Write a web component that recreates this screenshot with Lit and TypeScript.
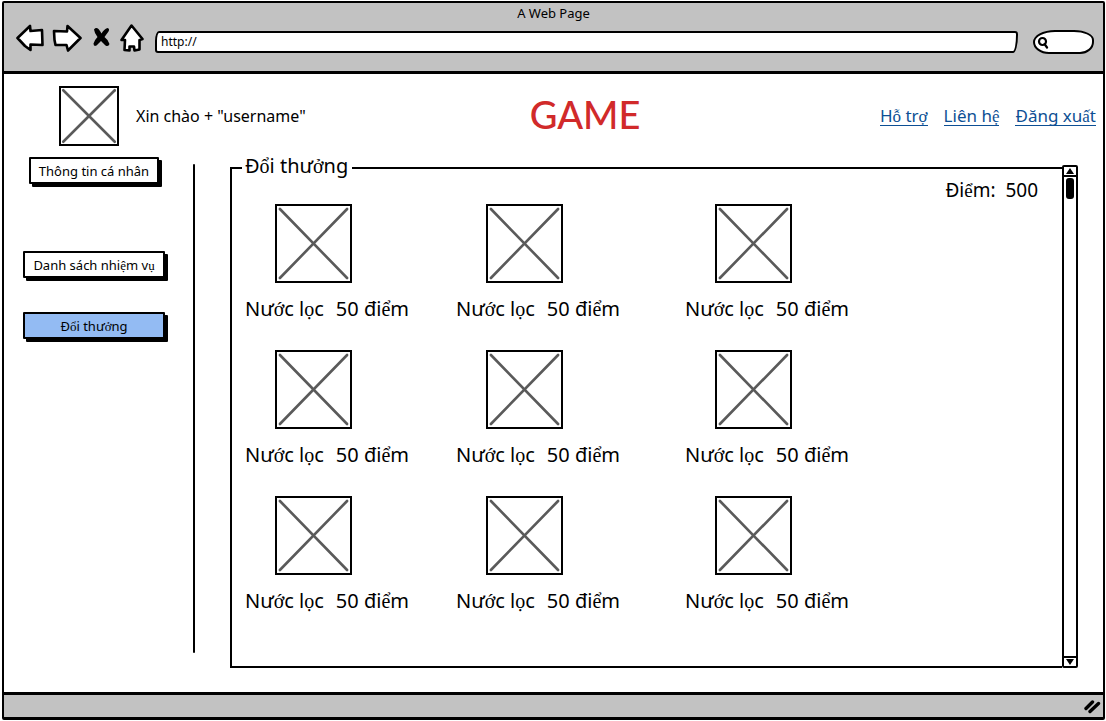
import { LitElement, html, css, svg } from "lit";
import { customElement, property } from "lit/decorators.js";

/** Vietnamese letters with stacked marks are set in the serif fallback face. */
const viet = (text: string) =>
  text
    .split(/([\u1ea0-\u1ef9]+)/)
    .filter((part) => part)
    .map((part) =>
      /[\u1ea0-\u1ef9]/.test(part) ? html`<span class="alt">${part}</span>` : part
    );

const altFace = css`
  .alt {
    font-family: "Liberation Serif", serif;
    line-height: 1;
  }
`;

@customElement("image-placeholder")
export class ImagePlaceholder extends LitElement {
  static styles = css`
    :host {
      display: block;
      box-sizing: border-box;
      border: 2px solid #000;
      background: #fff;
    }
    svg {
      display: block;
      width: 100%;
      height: 100%;
    }
    .cross {
      stroke: #5a5a5a;
      stroke-width: 2.6;
      stroke-linecap: round;
      vector-effect: non-scaling-stroke;
    }
  `;

  render() {
    return html`<svg viewBox="0 0 100 100" preserveAspectRatio="none" aria-hidden="true">
      <line class="cross" x1="4" y1="4" x2="96" y2="96"></line>
      <line class="cross" x1="96" y1="4" x2="4" y2="96"></line>
    </svg>`;
  }
}

@customElement("reward-card")
export class RewardCard extends LitElement {
  @property() name = "";
  @property() cost = "";

  static styles = [
    altFace,
    css`
      :host {
        display: block;
      }
      .picture {
        width: 77px;
        height: 79px;
        margin-left: 30px;
      }
      .caption {
        display: flex;
        gap: 12px;
        margin: 14px 0 0;
        font-size: 20px;
        line-height: 24px;
        white-space: nowrap;
      }
    `,
  ];

  render() {
    return html`
      <image-placeholder class="picture"></image-placeholder>
      <p class="caption"><span>${viet(this.name)}</span><span>${viet(this.cost)}</span></p>
    `;
  }
}

const outline = (d: string) =>
  svg`<path d=${d} fill="#fff" stroke="#000" stroke-width="2.6" stroke-linejoin="round"></path>`;

@customElement("app-root")
export class AppRoot extends LitElement {
  private rewards = Array.from({ length: 9 }, () => ({ name: "Nước lọc", cost: "50 điểm" }));

  static styles = [
    altFace,
    css`
      :host {
        display: block;
        box-sizing: border-box;
        min-height: 100vh;
        padding: 1px 1px 1px 2px;
        background: #fff;
        color: #000;
        font-family: "Noto Sans", sans-serif;
        font-size: 13px;
      }
      .window {
        display: flex;
        flex-direction: column;
        box-sizing: border-box;
        min-height: calc(100vh - 2px);
        border: 2px solid #000;
        border-bottom-width: 3px;
        border-radius: 2px;
      }
      .chrome {
        background: #c2c2c2;
        border-bottom: 3px solid #000;
        height: 68px;
      }
      .title {
        margin: 0;
        padding-top: 1px;
        font-size: 13px;
        font-weight: 400;
        line-height: 19px;
        text-align: center;
      }
      .toolbar {
        display: flex;
        align-items: center;
        gap: 8px;
        height: 34px;
        padding: 0 9px 0 12px;
      }
      .tool {
        display: block;
        margin-bottom: 5px;
        padding: 0;
        border: 0;
        background: none;
      }
      .tool svg {
        display: block;
      }
      .address {
        flex: 1;
        box-sizing: border-box;
        min-width: 0;
        height: 22px;
        margin: 3px 7px 0 3px;
        padding: 0 4px;
        border: 2px solid #000;
        border-radius: 4px 3px 5px 3px / 10px 3px 18px 3px;
        background: #fff;
        color: #000;
        font: inherit;
        font-size: 12px;
      }
      .search {
        display: flex;
        align-items: center;
        box-sizing: border-box;
        width: 61px;
        height: 24px;
        margin-top: 3px;
        padding-left: 2px;
        border: 2px solid #000;
        border-radius: 22px 20px 14px 16px / 12px 10px 12px 12px;
        background: #fff;
      }
      .search input {
        flex: 1;
        min-width: 0;
        padding: 0;
        border: 0;
        background: none;
        font: inherit;
        outline: none;
      }
      .masthead {
        display: grid;
        grid-template-columns: 25fr auto 22fr;
        align-items: center;
        padding-top: 12px;
      }
      .user {
        display: flex;
        align-items: center;
        gap: 17px;
        padding-left: 55px;
        font-size: 16px;
      }
      .avatar {
        width: 60px;
        height: 60px;
      }
      .brand {
        margin: 0;
        padding-bottom: 4px;
        color: #d12a2a;
        font-family: Lato, sans-serif;
        font-size: 38px;
        font-weight: 500;
        line-height: 48px;
      }
      .links {
        display: flex;
        justify-content: flex-end;
        gap: 16px;
        padding-right: 7px;
        font-size: 17px;
        line-height: 18px;
      }
      .links a {
        color: #0d4f94;
        border-bottom: 1px solid #0d4f94;
        text-decoration: none;
      }
      .body {
        display: flex;
        flex: 1;
        padding: 10px 25px 24px 18px;
      }
      .menu {
        display: flex;
        flex-direction: column;
        align-items: center;
        gap: 34px;
        width: 144px;
        padding-top: 1px;
      }
      .menu button {
        box-sizing: border-box;
        width: 142px;
        height: 27px;
        padding: 0;
        border: 2px solid #000;
        border-radius: 1px;
        background: #fff;
        box-shadow: 3px 3px 0 #000;
        color: #000;
        font: inherit;
        font-size: 13px;
        line-height: 20px;
      }
      .menu .profile {
        width: 130px;
        margin-bottom: 33px;
      }
      .menu .current {
        background: #93bbf3;
      }
      .divider {
        width: 2px;
        margin: 8px 35px 15px 27px;
        border-radius: 2px;
        background: #000;
      }
      .panel {
        flex: 1;
        min-width: 0;
        margin: 0;
        padding: 0 0 0 13px;
        border: 2px solid #000;
        border-right: 0;
      }
      .panel legend {
        margin-left: -3px;
        padding: 0 4px 4px 3px;
        font-size: 20px;
        line-height: 20px;
      }
      .points {
        margin: 0;
        padding-right: 24px;
        font-size: 19px;
        line-height: 20px;
        text-align: right;
        white-space: pre;
      }
      .rewards {
        display: grid;
        grid-template-columns: 211fr 229fr 377fr;
        row-gap: 29px;
        padding-top: 4px;
      }
      .scroll {
        display: flex;
        flex-direction: column;
        align-items: center;
        justify-content: space-between;
        box-sizing: border-box;
        width: 16px;
        margin-top: 9px;
        border: 2px solid #000;
        border-radius: 2px;
      }
      .scroll button {
        display: block;
        box-sizing: border-box;
        width: 12px;
        height: 10px;
        padding: 0;
        border: 0;
        background: #fff;
      }
      .scroll svg {
        display: block;
      }
      .scroll .up {
        border-bottom: 2px solid #000;
      }
      .scroll .down {
        border-top: 2px solid #000;
      }
      .thumb {
        width: 8px;
        height: 21px;
        margin: 1px 0 auto;
        border-radius: 3px;
        background: #000;
      }
      .status {
        display: flex;
        align-items: center;
        justify-content: flex-end;
        height: 22px;
        padding: 0 2px;
        border-top: 3px solid #000;
        background: #c2c2c2;
      }
    `,
  ];

  render() {
    return html`
      <div class="window">
        <header class="chrome">
          <h1 class="title">A Web Page</h1>
          <div class="toolbar">
            <button class="tool" aria-label="Back">
              <svg width="28" height="28" viewBox="0 0 28 28">
                ${outline("M1.500 14 14 2 14.500 7 26 6 26.500 21 14.500 20.500 14.500 26 9 22Z")}
              </svg>
            </button>
            <button class="tool" aria-label="Forward">
              <svg width="30" height="28" viewBox="0 0 30 28">
                ${outline("M2 7 15 7.500 15.500 2 28.500 14 16 26.500 14.500 21 3.500 21 2.500 16Z")}
              </svg>
            </button>
            <button class="tool" aria-label="Stop">
              <svg width="22" height="28" viewBox="0 0 22 28">
                <path d="M4 5.500Q6 3 8.500 5 10 6.500 11.500 9.500 14 5 17.500 4 20 4.500 18.500 7.500L14.500 13Q18.500 16 19.500 20 18.500 23 15.500 21.500L11 17 6.500 21.500Q3.500 23 3.500 19.500 4.500 16 7.500 13 4.500 9.500 4 5.500Z"></path>
              </svg>
            </button>
            <button class="tool" aria-label="Home">
              <svg width="24" height="28" viewBox="0 0 24 28">
                ${outline("M11.500 1.500 22.500 15 19.500 16 19.500 25.500 14.500 26.500 14 22.500 9.500 22.500 9.500 26.500 4.500 26 5 16 1.500 16Z")}
              </svg>
            </button>
            <input class="address" type="text" value="http://" aria-label="Address" />
            <label class="search">
              <svg width="12" height="14" viewBox="0 0 12 14" aria-hidden="true">
                <path d="M9 6.500A3.500 3.500 0 1 1 2 6.500A3.500 3.500 0 1 1 9 6.500M7.500 9 10 12.500"
                  fill="none" stroke="#000" stroke-width="2.200" stroke-linecap="round"></path>
              </svg>
              <input type="text" aria-label="Search" />
            </label>
          </div>
        </header>

        <div class="masthead">
          <div class="user">
            <image-placeholder class="avatar"></image-placeholder>
            <span>Xin chào + "username"</span>
          </div>
          <h2 class="brand">GAME</h2>
          <nav class="links">
            <a href="#support">${viet("Hỗ trợ")}</a>
            <a href="#contact">${viet("Liên hệ")}</a>
            <a href="#logout">${viet("Đăng xuất")}</a>
          </nav>
        </div>

        <main class="body">
          <nav class="menu">
            <button class="profile">Thông tin cá nhân</button>
            <button>${viet("Danh sách nhiệm vụ")}</button>
            <button class="current">${viet("Đổi thưởng")}</button>
          </nav>
          <div class="divider"></div>
          <fieldset class="panel">
            <legend>${viet("Đổi thưởng")}</legend>
            <p class="points">${viet("Điểm:  500")}</p>
            <div class="rewards">
              ${this.rewards.map(
                (r) => html`<reward-card .name=${r.name} .cost=${r.cost}></reward-card>`
              )}
            </div>
          </fieldset>
          <div class="scroll">
            <button class="up" aria-label="Scroll up">
              <svg width="12" height="8" viewBox="0 0 12 8"><path d="M6 1 10 7H2Z"></path></svg>
            </button>
            <div class="thumb"></div>
            <button class="down" aria-label="Scroll down">
              <svg width="12" height="8" viewBox="0 0 12 8"><path d="M2 1H10L6 7Z"></path></svg>
            </button>
          </div>
        </main>

        <footer class="status">
          <svg width="17" height="16" viewBox="0 0 17 16" aria-hidden="true">
            <path d="M2 10.500 8.500 4M6 13.500 14.500 5.500" fill="none" stroke="#000"
              stroke-width="3.400" stroke-linecap="round"></path>
          </svg>
        </footer>
      </div>
    `;
  }
}
